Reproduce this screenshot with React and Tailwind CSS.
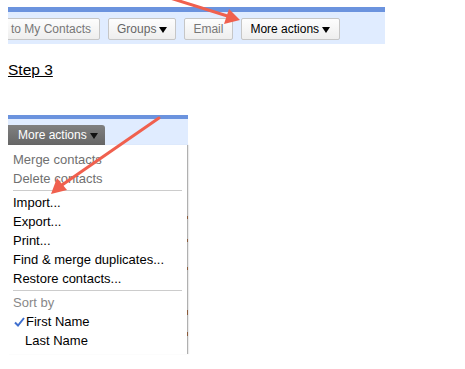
import React from "react";

const Tri = ({ color = "#000" }) => (
  <svg width="8" height="6" viewBox="0 0 8 6" className="ml-[3px] mt-[2px]">
    <polygon points="0,0 8,0 4,6" fill={color} />
  </svg>
);

const TopBtn = ({ children, className = "" }) => (
  <div
    className={
      "flex h-[22px] items-center rounded-[2px] border border-[#c6c6c6] bg-gradient-to-b from-[#fdfdfd] to-[#eeeeee] px-[8px] text-[12px] " +
      className
    }
  >
    {children}
  </div>
);

const Item = ({ children, className = "" }) => (
  <div className={"h-[19px] pl-[5px] leading-[19px] " + className}>{children}</div>
);

const Sep = () => <div className="mx-[5px] mb-[2px] mt-[2px] h-px bg-[#cccccc]" />;

export default function App() {
  return (
    <div
      className="relative h-[369px] w-[465px] overflow-hidden bg-white pl-[8px] pt-[7px]"
      style={{ fontFamily: '"Liberation Sans", Arial, sans-serif' }}
    >
      {/* top toolbar */}
      <div className="w-[377px] overflow-hidden border-t-[5px] border-[#6b93de] bg-[#e0ecff] pb-[4px] pt-[6px]">
        <div className="flex gap-[8px]">
          <TopBtn className="-ml-[6px] text-[#777]">to My Contacts</TopBtn>
          <TopBtn className="text-[#666]">
            Groups
            <Tri />
          </TopBtn>
          <TopBtn className="text-[#777] pr-[9px]">Email</TopBtn>
          <TopBtn className="border-[#b8b8b8] text-black pr-[9px]">
            More actions
            <Tri />
          </TopBtn>
        </div>
      </div>

      {/* Step 3 */}
      <div className="mt-[17px] text-[15.5px] leading-[18px] text-black underline">Step 3</div>

      {/* second section */}
      <div className="mt-[36px] w-[180px]">
        <div className="border-t-[4px] border-[#6b93de] bg-[#e0ecff] pt-[6px]">
          <div className="flex h-[20px] w-[97px] items-center rounded-tr-[3px] bg-gradient-to-b from-[#808080] to-[#666666] pl-[10px] text-[12px] text-white">
            More actions
            <Tri color="#111" />
          </div>
        </div>
        <div className="relative h-[209px] border-r border-[#b0b0b0] bg-white pt-[5px] text-[13px] text-black shadow-[1px_0_1px_rgba(0,0,0,0.08)]">
          <Item className="text-[#707070]">Merge contacts</Item>
          <Item className="text-[#707070]">Delete contacts</Item>
          <Sep />
          <Item>Import...</Item>
          <Item>Export...</Item>
          <Item>Print...</Item>
          <Item>Find &amp; merge duplicates...</Item>
          <Item>Restore contacts...</Item>
          <Sep />
          <Item className="text-[#888]">Sort by</Item>
          <div className="flex h-[19px] items-center pl-[6px] leading-[19px]">
            <svg width="11" height="10" viewBox="0 0 11 10" className="mr-[1px]">
              <path d="M1 5.5 L4 8.5 L10 1" stroke="#3f6fce" strokeWidth="2" fill="none" />
            </svg>
            First Name
          </div>
          <Item className="pl-[17px]">Last Name</Item>
          <span className="absolute right-[-1px] top-[71px] h-[3px] w-px bg-[#8a5a3a]" />
          <span className="absolute right-[-1px] top-[94px] h-[3px] w-px bg-[#8a5a3a]" />
          <span className="absolute right-[-1px] top-[122px] h-[3px] w-px bg-[#8a5a3a]" />
          <span className="absolute right-[-1px] top-[165px] h-[5px] w-px bg-[#8a5a3a]" />
          <span className="absolute right-[-1px] top-[187px] h-[4px] w-px bg-[#8a5a3a]" />
        </div>
      </div>

      {/* arrows overlay */}
      <svg className="pointer-events-none absolute left-0 top-0" width="465" height="369">
        <line x1="170" y1="-2" x2="229" y2="16.5" stroke="#f0604e" strokeWidth="3" strokeLinecap="round" />
        <polygon points="240,20 224,24 229,9" fill="#f0604e" />
        <line x1="159" y1="118" x2="62" y2="185" stroke="#f0604e" strokeWidth="3" strokeLinecap="round" />
        <polygon points="51,194 57,178 67,190" fill="#f0604e" />
      </svg>
    </div>
  );
}
